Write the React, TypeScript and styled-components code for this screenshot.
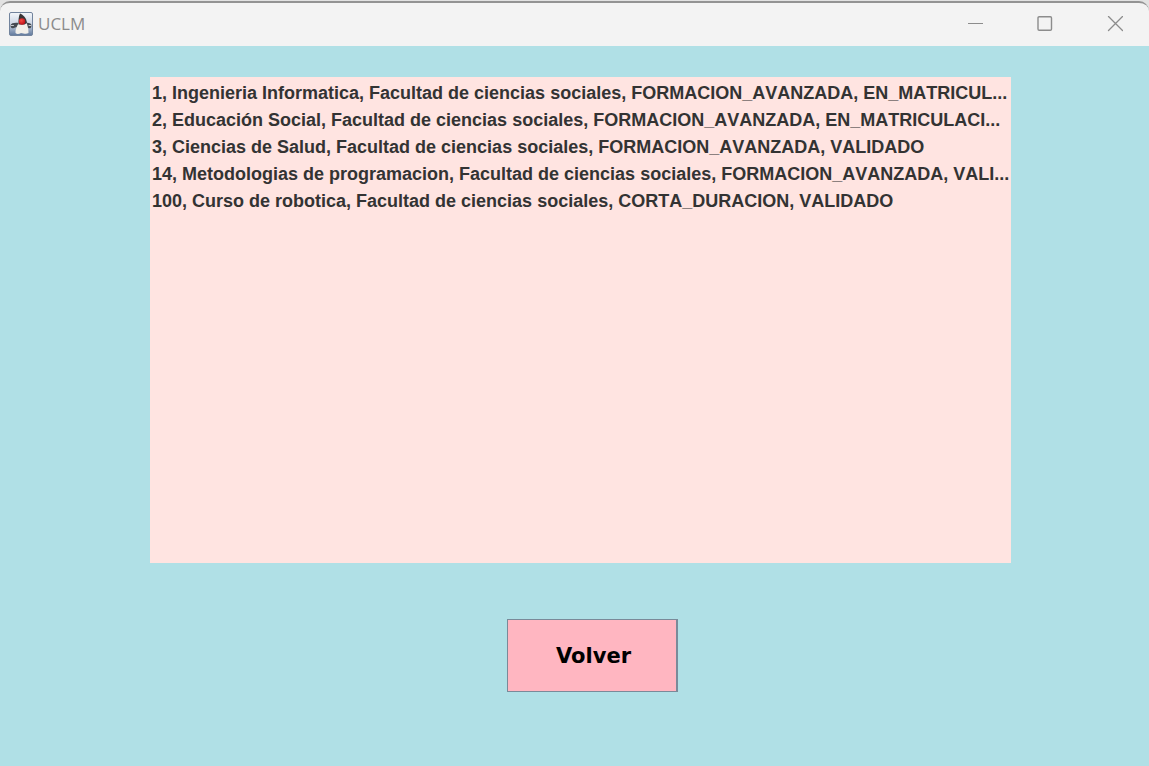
import React from "react";
import styled, { createGlobalStyle } from "styled-components";

const GlobalStyle = createGlobalStyle`
  *, *::before, *::after { box-sizing: border-box; }
  body {
    margin: 0;
    background: #e2e2e2;
    font-family: "Liberation Sans", Arial, sans-serif;
  }
`;

const Window = styled.div`
  display: flex;
  flex-direction: column;
  min-height: 100vh;
  padding-top: 1px;
`;

const TitleBar = styled.header`
  display: flex;
  align-items: center;
  height: 45px;
  padding: 0 0 2px 9px;
  background: #f3f3f3;
  border-top: 2px solid #939393;
  border-radius: 10px 10px 0 0;
`;

const Title = styled.h1`
  flex: 1;
  margin: 0 0 0 5px;
  color: #8b8b8b;
  font-family: "Open Sans", "Noto Sans", sans-serif;
  font-size: 17px;
  font-weight: 400;
  line-height: 24px;
`;

const WindowControls = styled.div`
  display: flex;
  align-self: stretch;
`;

const ControlButton = styled.button`
  display: flex;
  align-items: center;
  justify-content: center;
  width: 70px;
  padding: 0 0 0 2px;
  border: 0;
  background: transparent;
  color: #8c8c8c;
`;

const Content = styled.main`
  flex: 1;
  display: grid;
  grid-template-columns: 150fr 861fr 138fr;
  grid-template-rows: auto 1fr;
  row-gap: 56px;
  padding: 31px 0 74px;
  background: #b0e0e6;
`;

const CourseList = styled.ul`
  grid-column: 2;
  min-height: 486px;
  min-width: 0;
  margin: 0;
  padding: 3px 0 0 2px;
  overflow: hidden;
  list-style: none;
  background: #ffe4e1;
`;

const CourseRow = styled.li`
  color: #333333;
  font-size: 18px;
  font-weight: 700;
  font-kerning: none;
  line-height: 27px;
  white-space: nowrap;
`;

const Actions = styled.div`
  grid-column: 2;
  display: flex;
  align-items: flex-start;
  justify-content: center;
  padding-left: 24px;
`;

const BackButton = styled.button`
  width: 171px;
  height: 73px;
  padding: 0 0 0 3px;
  border: 1px solid #7a8a99;
  border-right-width: 2px;
  background: #ffb6c1;
  color: #000000;
  font-family: "DejaVu Sans", Tahoma, sans-serif;
  font-size: 21px;
  font-weight: 700;
  line-height: 24px;
`;

const courses = [
  "1, Ingenieria Informatica, Facultad de ciencias sociales, FORMACION_AVANZADA, EN_MATRICUL...",
  "2, Educación Social, Facultad de ciencias sociales, FORMACION_AVANZADA, EN_MATRICULACI...",
  "3, Ciencias de Salud, Facultad de ciencias sociales, FORMACION_AVANZADA, VALIDADO",
  "14, Metodologias de programacion, Facultad de ciencias sociales, FORMACION_AVANZADA, VALI...",
  "100, Curso de robotica, Facultad de ciencias sociales, CORTA_DURACION, VALIDADO",
];

function DukeIcon() {
  return (
    <svg width="24" height="24" viewBox="0 0 24 24" aria-hidden="true">
      <defs>
        <linearGradient id="tile" x1="0" y1="0" x2="0" y2="1">
          <stop offset="0" stopColor="#f4f7fb" />
          <stop offset="0.5" stopColor="#cbd5e3" />
          <stop offset="1" stopColor="#5f789c" />
        </linearGradient>
        <radialGradient id="nose" cx="0.4" cy="0.35" r="0.7">
          <stop offset="0" stopColor="#f4483f" />
          <stop offset="1" stopColor="#b90d16" />
        </radialGradient>
      </defs>
      <rect x="0.5" y="0.5" width="23" height="23" rx="1.5" fill="url(#tile)" stroke="#72849d" />
      <path d="M9.500 11C6 10.500 2 11 1.500 13.500C1.500 16.500 4.500 17 6 15.500L9 15Z" fill="#454b52" />
      <path d="M16 11C20 10.500 22.500 11.500 22.500 13.500C22.500 16.500 20 17 18.500 15.500L16 15Z" fill="#454b52" />
      <path d="M9.500 11.500C8 14 6 18 6.500 21C8 22.500 10 22 12 21C15 21.500 17 22.500 19.500 21C19.500 17 18.500 13 17.500 10.500Z" fill="#f1efe9" />
      <path d="M11 1.500C14 2.500 17.500 6 18 11L15.500 12.500L9.500 12.500C9.500 8 9.500 4 11 1.500Z" fill="#383638" />
      <path d="M2 13.500H4.500M20 13.500H22" stroke="#c5c9cd" strokeWidth="1" strokeLinecap="round" />
      <circle cx="13" cy="9.500" r="3.200" fill="url(#nose)" />
    </svg>
  );
}

export default function App() {
  return (
    <>
      <GlobalStyle />
      <Window>
        <TitleBar>
          <DukeIcon />
          <Title>UCLM</Title>
          <WindowControls>
            <ControlButton type="button" aria-label="Minimizar">
              <svg width="16" height="16" viewBox="0 0 16 16" stroke="currentColor">
                <path d="M1 7.500H16" />
              </svg>
            </ControlButton>
            <ControlButton type="button" aria-label="Maximizar">
              <svg width="16" height="16" viewBox="0 0 16 16" fill="none" stroke="currentColor">
                <rect x="1" y="0.700" width="13.500" height="13.500" rx="1.200" strokeWidth="1.400" />
              </svg>
            </ControlButton>
            <ControlButton type="button" aria-label="Cerrar">
              <svg width="16" height="16" viewBox="0 0 16 16" stroke="currentColor">
                <path d="M1.500 0.500L15.500 14.500M15.500 0.500L1.500 14.500" strokeWidth="1.300" strokeLinecap="round" />
              </svg>
            </ControlButton>
          </WindowControls>
        </TitleBar>
        <Content>
          <CourseList aria-label="Cursos">
            {courses.map((course) => (
              <CourseRow key={course}>{course}</CourseRow>
            ))}
          </CourseList>
          <Actions>
            <BackButton type="button">Volver</BackButton>
          </Actions>
        </Content>
      </Window>
    </>
  );
}
